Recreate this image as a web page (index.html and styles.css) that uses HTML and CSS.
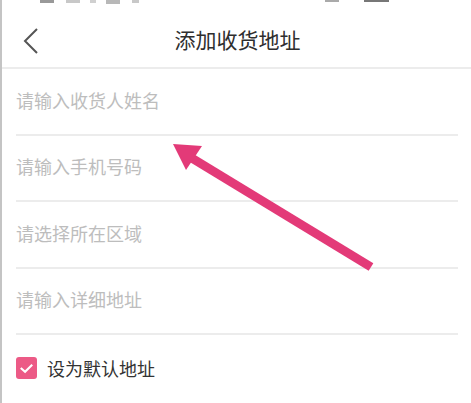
FILE: index.html
```html
<!DOCTYPE html>
<html lang="zh">
<head>
<meta charset="utf-8">
<link rel="stylesheet" href="styles.css">
</head>
<body>
<div class="screen">
  <div class="status">
    <span class="sb sb1"></span>
    <span class="sb sb2"></span>
    <span class="sb sb3"></span>
    <span class="sb sb4"></span>
    <span class="sb sb5"></span>
    <span class="spacer"></span>
    <span class="sb sb6"></span>
    <span class="sb sb7"></span>
  </div>
  <header class="header">
    <svg class="back" width="16" height="26" viewBox="0 0 16 26"><path d="M14 1 L2 13 L14 25" fill="none" stroke="#555" stroke-width="2"/></svg>
    <h1 class="title">添加收货地址</h1>
  </header>
  <div class="band"></div>
  <div class="form">
    <div class="row">请输入收货人姓名</div>
    <div class="row">请输入手机号码</div>
    <div class="row">请选择所在区域</div>
    <div class="row">请输入详细地址</div>
    <div class="check-row">
      <span class="checkbox"><svg width="22" height="22" viewBox="0 0 22 22"><path d="M5 11 L9.5 15 L17 7.5" fill="none" stroke="#fff" stroke-width="2.2"/></svg></span>
      <span class="check-label">设为默认地址</span>
    </div>
  </div>
  <svg class="arrow" width="471" height="403" viewBox="0 0 471 403">
    <line x1="371" y1="267" x2="190" y2="157" stroke="#e33a78" stroke-width="9" stroke-linecap="butt"/>
    <polygon points="173,144 202,146 186,170" fill="#e33a78"/>
  </svg>
</div>
</body>
</html>
```
FILE: styles.css
```css
html, body { margin: 0; padding: 0; background: #fff; }
body { font-family: "Noto Sans CJK SC", "Noto Sans", sans-serif; }
.screen {
  position: relative;
  width: 469px;
  height: 403px;
  border-left: 2px solid #c4c4c4;
  overflow: hidden;
  background: #fff;
}
.status {
  height: 14px;
  display: flex;
  align-items: flex-start;
}
.sb { display: block; height: 3px; background: #b5b5b5; }
.sb1 { width: 14px; margin-left: 38px; background: #999; }
.sb2 { width: 14px; margin-left: 12px; background: #c8c8c8; }
.sb3 { width: 6px; margin-left: 10px; background: #d0d0d0; }
.sb4 { width: 14px; margin-left: 10px; height: 4px; background: #b8b8b8; }
.sb5 { width: 7px; margin-left: 12px; background: #c8c8c8; }
.spacer { flex: 1; }
.sb6 { width: 14px; margin-right: 25px; background: #aaa; height: 2px; }
.sb7 { width: 25px; margin-right: 82px; background: #777; height: 2px; }
.header {
  height: 53px;
  display: flex;
  align-items: center;
  justify-content: center;
  position: relative;
}
.back { position: absolute; left: 21px; top: 14px; }
.title {
  margin: 0 0 3px 2px;
  font-size: 21px;
  font-weight: 400;
  color: #2e2e2e;
}
.band { height: 2px; background: #ececec; }
.form { padding: 0 13px 0 14px; }
.row {
  box-sizing: border-box;
  height: 66.5px;
  padding-bottom: 3px;
  border-bottom: 2px solid #ececec;
  display: flex;
  align-items: center;
  font-size: 18px;
  line-height: 1;
  color: #bdbdbd;
}
.check-row {
  display: flex;
  align-items: center;
  height: 66px;
  gap: 10px;
}
.checkbox {
  width: 21px;
  height: 22px;
  border-radius: 3px;
  background: #ec5a86;
  display: flex;
  align-items: center;
  justify-content: center;
}
.check-label { font-size: 18px; color: #333; }
.arrow { position: absolute; left: -2px; top: 0; pointer-events: none; }
```
